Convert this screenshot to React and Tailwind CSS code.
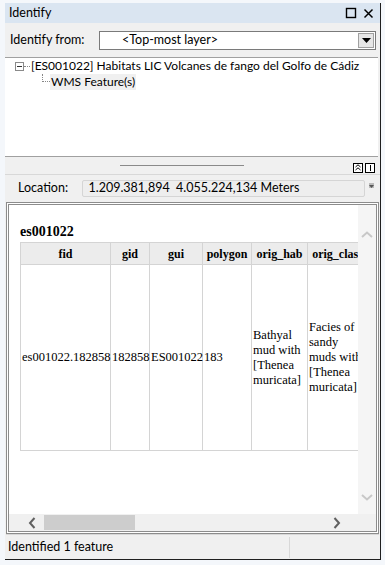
import React from 'react';

const ui = { fontFamily: 'Lato, "Noto Sans", "Liberation Sans", sans-serif' };
const serif = { fontFamily: '"Liberation Serif", "Times New Roman", serif' };

function TitleBar() {
  return (
    <div className="h-[20px] bg-[#dae5f1] flex items-center pl-[4px] pr-[6px]">
      <span className="text-[12.5px] text-black flex-1">Identify</span>
      <svg width="12" height="12" viewBox="0 0 12 12" className="mr-[6px]">
        <rect x="1.5" y="1.5" width="9" height="9" fill="none" stroke="#000" strokeWidth="1.4" />
      </svg>
      <svg width="11" height="11" viewBox="0 0 11 11">
        <path d="M1.5 1.5 L9.5 9.5 M9.5 1.5 L1.5 9.5" stroke="#000" strokeWidth="1.5" />
      </svg>
    </div>
  );
}

function IdentifyFrom() {
  return (
    <div className="flex items-center h-[34px] pl-[5px] pr-[4px]">
      <span className="text-[12.5px] w-[89px]">Identify from:</span>
      <div className="flex-1 h-[19px] bg-white border border-[#7a7a7a] flex items-center">
        <span className="flex-1 text-[12.5px] pl-[22px]">&lt;Top-most layer&gt;</span>
        <div className="w-[16px] h-[15px] mr-[1px] bg-[#e6e6e6] border border-[#a0a0a0] flex items-center justify-center">
          <svg width="9" height="5" viewBox="0 0 9 5"><path d="M0 0 H9 L4.5 5 Z" fill="#000" /></svg>
        </div>
      </div>
    </div>
  );
}

function Tree() {
  return (
    <div className="h-[100px] bg-white border-t border-b border-[#a0a0a0] mr-[2px]">
      <div className="flex items-center h-[16px] pl-[10px]">
        <div className="w-[9px] h-[9px] border border-[#8a8a8a] flex items-center justify-center">
          <div className="w-[5px] h-px bg-[#333]" />
        </div>
        <div className="w-[6px] border-t border-dotted border-[#888] mr-px" />
        <span className="text-[12px] leading-[16px] whitespace-nowrap">[ES001022] Habitats LIC Volcanes de fango del Golfo de Cádiz</span>
      </div>
      <div className="flex items-start h-[16px] pl-[37px]">
        <div className="w-[8px] h-[8px] border-l border-b border-dotted border-[#888]" />
        <span className="text-[12px] leading-[16px] bg-[#f0f0f0] px-px">WMS Feature(s)</span>
      </div>
    </div>
  );
}

function Splitter() {
  return (
    <div className="h-[17px] flex items-center">
      <div className="flex-1 flex justify-center">
        <div className="w-[124px] h-px bg-[#8a8a8a] ml-[6px]" />
      </div>
      <div className="flex gap-[2px] mr-[5px] mt-[4px]">
        <div className="w-[10px] h-[10px] border border-black bg-white flex items-center justify-center">
          <svg width="6" height="7" viewBox="0 0 6 7"><path d="M0.5 3 L3 0.8 L5.5 3 M0.5 6 L3 3.8 L5.5 6" stroke="#000" fill="none" strokeWidth="1" /></svg>
        </div>
        <div className="w-[10px] h-[10px] border border-black bg-white flex items-center justify-center">
          <div className="w-px h-[6px] bg-black" />
        </div>
      </div>
    </div>
  );
}

function Location() {
  return (
    <div className="border-t border-[#d8d8d8] h-[28px] flex items-center pl-[13px] pr-[6px]">
      <span className="text-[12.5px] w-[65px]">Location:</span>
      <div className="w-[285px] h-[17px] bg-[#eeeeee] border border-[#d5d5d5] rounded-[2px] flex items-center pl-[5px]">
        <span className="text-[12.5px] leading-none">1.209.381,894&nbsp;&nbsp;4.055.224,134 Meters</span>
      </div>
      <div className="ml-[4px] mb-[6px] w-[5px] h-[5px] bg-[#bbb] flex items-end justify-center">
        <svg width="5" height="3" viewBox="0 0 5 3"><path d="M0 0 H5 L2.5 3Z" fill="#555" /></svg>
      </div>
    </div>
  );
}

const cols = [
  { name: 'fid', w: 90, v: 'es001022.182858' },
  { name: 'gid', w: 39, v: '182858' },
  { name: 'gui', w: 53, v: 'ES001022' },
  { name: 'polygon', w: 49, v: '183' },
  { name: 'orig_hab', w: 56, v: 'Bathyal mud with [Thenea muricata]' },
  { name: 'orig_class', w: 60, v: 'Facies of sandy muds with [Thenea muricata]' },
];

function Results() {
  return (
    <div className="h-[332px] mx-[1px] border-[3px] border-double border-[#8c8c8c] bg-white flex flex-col">
      <div className="flex flex-1 min-h-0">
        <div className="flex-1 overflow-hidden pl-[11px] pt-[20px]" style={serif}>
          <div className="text-[14px] font-bold leading-none mb-[3px]">es001022</div>
          <div className="flex w-[360px] border-l border-b border-[#d4d4d4]">
            {cols.map((c) => (
              <div key={c.name} className="flex flex-col border-r border-[#d4d4d4] shrink-0" style={{ width: c.w }}>
                <div className="h-[22px] bg-[#ececec] border-t border-[#d4d4d4] flex items-center justify-center text-[12px] font-bold whitespace-nowrap overflow-hidden">
                  {c.name}
                </div>
                <div className="h-[186px] border-t border-[#d4d4d4] flex items-center pl-px text-[12.5px] leading-[15px]">
                  {c.v}
                </div>
              </div>
            ))}
          </div>
        </div>
        <div className="w-[18px] bg-[#f5f5f5] flex flex-col items-center justify-between pt-[26px] pb-[13px]">
          <svg width="12" height="7" viewBox="0 0 12 7"><path d="M1 6 L6 1.5 L11 6" stroke="#c8c8c8" strokeWidth="2" fill="none" /></svg>
          <svg width="12" height="7" viewBox="0 0 12 7"><path d="M1 1 L6 5.5 L11 1" stroke="#c8c8c8" strokeWidth="2" fill="none" /></svg>
        </div>
      </div>
      <div className="h-[17px] bg-[#f0f0f0] flex items-center pl-[19px] pr-[35px]">
        <svg width="8" height="12" viewBox="0 0 8 12" className="mr-[8px]"><path d="M6.5 1 L2 6 L6.5 11" stroke="#606060" strokeWidth="2" fill="none" /></svg>
        <div className="w-[91px] h-[15px] bg-[#cdcdcd]" />
        <div className="flex-1" />
        <svg width="8" height="12" viewBox="0 0 8 12"><path d="M1.5 1 L6 6 L1.5 11" stroke="#606060" strokeWidth="2" fill="none" /></svg>
      </div>
    </div>
  );
}

function StatusBar() {
  return (
    <div className="h-[25px] border-t border-[#d8d8d8] flex items-center mx-[1px]">
      <span className="text-[12.5px] pl-[2px] w-[283px]">Identified 1 feature</span>
      <div className="w-px h-[21px] bg-[#d8d8d8]" />
    </div>
  );
}

export default function App() {
  return (
    <div className="w-[385px] h-[565px] bg-[#f4f7fb] pt-[3px] pl-[5px]" style={ui}>
      <div className="w-[376px] h-[557px] bg-[#f0f0f0] border-r border-b border-[#1f1f1f] flex flex-col text-black">
        <TitleBar />
        <IdentifyFrom />
        <Tree />
        <Splitter />
        <Location />
        <Results />
        <StatusBar />
      </div>
    </div>
  );
}
